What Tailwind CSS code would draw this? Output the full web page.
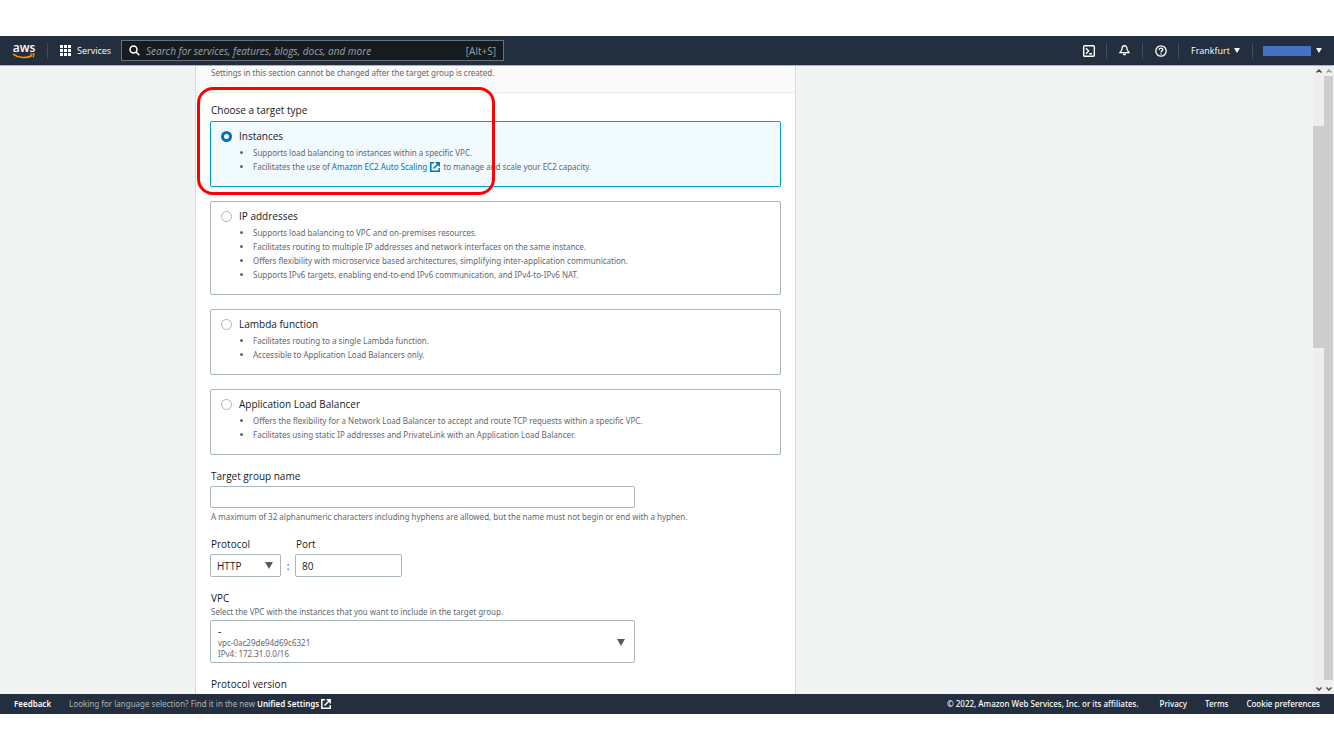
<!DOCTYPE html>
<html lang="en">
<head>
<meta charset="utf-8">
<meta name="viewport" content="width=device-width, initial-scale=1">
<title>Create target group</title>
<script src="https://cdn.jsdelivr.net/npm/@tailwindcss/browser@4"></script>
</head>
<body class="flex h-screen flex-col bg-white py-9 font-['Noto_Sans','Open_Sans',sans-serif] text-[8px] leading-[14px] text-[#5f6871]">
<header class="flex h-[30px] shrink-0 items-center border-b border-[#aab7b8] bg-[#232f3e] pr-3 pl-3 font-['Open_Sans','Noto_Sans',sans-serif] text-[9px] text-white">
  <a href="#" aria-label="AWS home" class="flex w-6 flex-col items-center">
    <span class="text-[12px] leading-[9px] font-semibold">aws</span>
    <svg class="mt-px h-[6px] w-[22px]" viewBox="0 0 22 6" fill="none" stroke="#ff9900"><path d="M0 1C6 5.500 14 5.500 19 2.500" stroke-width="1.500"/><path d="M17 1h4l-1 3.500" stroke-width="1.200"/></svg>
  </a>
  <span class="ml-[11px] h-4 w-px bg-[#414d5c]"></span>
  <button class="ml-3 flex items-center gap-[6px] font-medium">
    <svg class="size-[11px]" viewBox="0 0 11 11" fill="#fff"><path d="M0 0h3v3H0zM4 0h3v3H4zM8 0h3v3H8zM0 4h3v3H0zM4 4h3v3H4zM8 4h3v3H8zM0 8h3v3H0zM4 8h3v3H4zM8 8h3v3H8z"/></svg>
    <span class="w-8 whitespace-nowrap">Services</span>
  </button>
  <label class="ml-3 flex h-[21px] w-[383px] items-center border border-[#687078] bg-[#161b22] px-[7px]">
    <svg class="size-[11px] shrink-0" viewBox="0 0 11 11" fill="none" stroke="#fff" stroke-width="1.500"><circle cx="4.500" cy="4.500" r="3.500"/><path d="M7 7l3.300 3.300"/></svg>
    <input type="text" aria-label="Search" placeholder="Search for services, features, blogs, docs, and more" class="ml-[6px] min-w-0 flex-1 bg-transparent text-[10px] italic outline-none placeholder:text-[#95a5a6]">
    <span class="text-[10px] text-[#95a5a6]">[Alt+S]</span>
  </label>
  <nav class="ml-auto flex items-center">
    <button aria-label="CloudShell"><svg class="size-3" viewBox="0 0 12 12" fill="none" stroke="#fff" stroke-width="1.400"><rect x=".7" y=".7" width="10.600" height="10.600" rx="1"/><path d="M3 3.300L5.700 6 3 8.700M6.300 8.700H9"/></svg></button>
    <span class="ml-[11px] h-4 w-px bg-[#414d5c]"></span>
    <button aria-label="Notifications" class="ml-3"><svg class="size-[11px]" viewBox="0 0 12 12" fill="none" stroke="#fff" stroke-width="1.400" stroke-linejoin="round"><path d="M6 .8C4.200.8 3.400 2.200 3.400 3.800 3.400 5.600 2.500 6.400.8 8.400h10.400C9.500 6.400 8.600 5.600 8.600 3.800 8.600 2.200 7.800.8 6 .8z"/><path d="M4.600 9.200Q6 12.300 7.400 9.200"/></svg></button>
    <span class="ml-3 h-4 w-px bg-[#414d5c]"></span>
    <button aria-label="Help" class="ml-3"><svg class="size-3" viewBox="0 0 12 12" fill="none" stroke="#fff" stroke-width="1.300"><circle cx="6" cy="6" r="5.200"/><path d="M4.200 4.900C4.200 2.500 7.800 2.500 7.800 4.600 7.800 6 6 5.700 6 7.300M6 8.200v1.200"/></svg></button>
    <span class="ml-[11px] h-4 w-px bg-[#414d5c]"></span>
    <button class="ml-3 flex items-center gap-1 font-medium">Frankfurt <svg class="h-[5px] w-[6px]" viewBox="0 0 6 5" fill="#fff"><path d="M0 0h6L3 5z"/></svg></button>
    <span class="ml-3 h-4 w-px bg-[#414d5c]"></span>
    <button aria-label="Account" class="ml-[10px] flex items-center gap-[5px]"><span class="h-[10px] w-12 bg-[#4472c4]"></span><svg class="h-[5px] w-[6px]" viewBox="0 0 6 5" fill="#fff"><path d="M0 0h6L3 5z"/></svg></button>
  </nav>
</header>

<div class="flex min-h-0 flex-1 bg-[#f2f3f3]">
  <main class="min-w-0 flex-1 overflow-hidden pl-[195px]">
    <form class="relative w-[601px] border-x border-[#d5dbdb] bg-white pb-10">
      <p class="h-[27px] border-b border-[#eaeded] bg-[#fafafa] px-[15px]">Settings in this section cannot be changed after the target group is created.</p>
      <div class="px-[14px] pt-[10px]">
        <fieldset class="flex flex-col gap-[14px]">
          <legend class="mb-1 pl-px font-['Open_Sans'] text-[10px] text-[#16191f]">Choose a target type</legend>
          <div class="rounded-xs border border-[#00a1c9] bg-[#f1faff] px-[10px] pt-[7px] pb-3">
            <label class="flex items-center gap-[7px] font-['Open_Sans'] text-[10px] text-[#16191f]"><input type="radio" name="type" checked class="size-[11px] appearance-none rounded-full border border-[#aab7b8] bg-white checked:border-[3px] checked:border-[#0073bb]">Instances</label>
            <ul class="mt-[3px] list-disc pl-8">
              <li>Supports load balancing to instances within a specific VPC.</li>
              <li>Facilitates the use of <a href="#" class="text-[#0073bb]">Amazon EC2 Auto Scaling <svg class="mx-px inline size-[10px] align-[-2px]" viewBox="0 0 10 10" fill="none" stroke="currentColor" stroke-width="1.500"><path d="M4 .8H.8v8.400h8.400V6M5.500.8h3.700v3.700M9 1L3.500 6.500"/></svg></a> to manage and scale your EC2 capacity.</li>
            </ul>
          </div>
          <div class="rounded-xs border border-[#aab7b8] px-[10px] pt-[7px] pb-3">
            <label class="flex items-center gap-[7px] font-['Open_Sans'] text-[10px] text-[#16191f]"><input type="radio" name="type" class="size-[11px] appearance-none rounded-full border border-[#aab7b8] bg-white checked:border-[3px] checked:border-[#0073bb]">IP addresses</label>
            <ul class="mt-[3px] list-disc pl-8">
              <li>Supports load balancing to VPC and on-premises resources.</li>
              <li>Facilitates routing to multiple IP addresses and network interfaces on the same instance.</li>
              <li>Offers flexibility with microservice based architectures, simplifying inter-application communication.</li>
              <li>Supports IPv6 targets, enabling end-to-end IPv6 communication, and IPv4-to-IPv6 NAT.</li>
            </ul>
          </div>
          <div class="rounded-xs border border-[#aab7b8] px-[10px] pt-[7px] pb-3">
            <label class="flex items-center gap-[7px] font-['Open_Sans'] text-[10px] text-[#16191f]"><input type="radio" name="type" class="size-[11px] appearance-none rounded-full border border-[#aab7b8] bg-white checked:border-[3px] checked:border-[#0073bb]">Lambda function</label>
            <ul class="mt-[3px] list-disc pl-8">
              <li>Facilitates routing to a single Lambda function.</li>
              <li>Accessible to Application Load Balancers only.</li>
            </ul>
          </div>
          <div class="rounded-xs border border-[#aab7b8] px-[10px] pt-[7px] pb-3">
            <label class="flex items-center gap-[7px] font-['Open_Sans'] text-[10px] text-[#16191f]"><input type="radio" name="type" class="size-[11px] appearance-none rounded-full border border-[#aab7b8] bg-white checked:border-[3px] checked:border-[#0073bb]">Application Load Balancer</label>
            <ul class="mt-[3px] list-disc pl-8">
              <li>Offers the flexibility for a Network Load Balancer to accept and route TCP requests within a specific VPC.</li>
              <li>Facilitates using static IP addresses and PrivateLink with an Application Load Balancer.</li>
            </ul>
          </div>
        </fieldset>

        <div class="mt-[14px] flex flex-col">
          <label for="name" class="pl-px font-['Open_Sans'] text-[10px] text-[#16191f]">Target group name</label>
          <input id="name" type="text" class="mt-[3px] h-[22px] w-[425px] rounded-xs border border-[#aab7b8] px-[6px] text-[10px] text-[#16191f]">
          <p class="mt-[2px] pl-px">A maximum of 32 alphanumeric characters including hyphens are allowed, but the name must not begin or end with a hyphen.</p>
        </div>

        <div class="mt-[13px] flex items-end font-['Open_Sans'] text-[10px] text-[#16191f]">
          <div class="flex w-[71px] flex-col gap-[3px]">
            <label for="protocol" class="pl-px">Protocol</label>
            <div class="relative">
              <select id="protocol" class="h-[23px] w-full appearance-none rounded-xs border border-[#aab7b8] bg-white px-[6px]"><option>HTTP</option></select>
              <svg class="pointer-events-none absolute top-2 right-2 h-[7px] w-2" viewBox="0 0 8 7" fill="#545b64"><path d="M0 0h8L4 7z"/></svg>
            </div>
          </div>
          <span class="w-[14px] pb-1 text-center">:</span>
          <div class="flex w-[107px] flex-col gap-[3px]">
            <label for="port" class="pl-px">Port</label>
            <input id="port" type="text" value="80" class="h-[23px] rounded-xs border border-[#aab7b8] px-[6px]">
          </div>
        </div>

        <div class="mt-[15px]">
          <label for="vpc" class="block pl-px font-['Open_Sans'] text-[10px] leading-[13px] text-[#16191f]">VPC</label>
          <p class="pl-px leading-[13px]">Select the VPC with the instances that you want to include in the target group.</p>
          <button id="vpc" type="button" class="mt-[2px] flex h-[43px] w-[425px] items-center justify-between rounded-xs border border-[#aab7b8] pt-px pr-[9px] pl-[7px] text-left">
            <span class="flex flex-col leading-[11px]"><span class="text-[10px] text-[#16191f]">-</span><span>vpc-0ac29de94d69c6321</span><span>IPv4: 172.31.0.0/16</span></span>
            <svg class="h-[7px] w-2" viewBox="0 0 8 7" fill="#545b64"><path d="M0 0h8L4 7z"/></svg>
          </button>
        </div>
        <p class="mt-[14px] pl-px font-['Open_Sans'] text-[10px] text-[#16191f]">Protocol version</p>
      </div>
      <div class="pointer-events-none absolute top-[21px] left-[1px] h-[108px] w-[298px] rounded-[16px] border-[3px] border-[#ff0000]"></div>
    </form>
  </main>
  <div class="flex w-[11px] flex-col items-center bg-[#efefef]" aria-hidden="true">
    <svg class="mt-[3px] h-1 w-[6px]" viewBox="0 0 6 4" fill="none" stroke="#505050" stroke-width="1.500"><path d="M.5 3.500L3 1l2.500 2.500"/></svg>
    <span class="mt-[53px] h-[222px] w-full bg-[#cdcdcd]"></span>
    <svg class="mt-auto mb-[3px] h-1 w-[6px]" viewBox="0 0 6 4" fill="none" stroke="#505050" stroke-width="1.500"><path d="M.5.5L3 3 5.500.5"/></svg>
  </div>
  <div class="mr-px flex w-[9px] flex-col items-center bg-[#efefef]" aria-hidden="true">
    <svg class="mt-[3px] h-1 w-[6px]" viewBox="0 0 6 4" fill="none" stroke="#a3a3a3" stroke-width="1.500"><path d="M.5 3.500L3 1l2.500 2.500"/></svg>
    <span class="mt-[3px] w-full flex-1 bg-[#cdcdcd]"></span>
    <svg class="mt-[7px] mb-[3px] h-1 w-[6px]" viewBox="0 0 6 4" fill="none" stroke="#505050" stroke-width="1.500"><path d="M.5.5L3 3 5.500.5"/></svg>
  </div>
</div>

<footer class="flex h-5 shrink-0 items-center bg-[#232f3e] px-[14px] font-medium text-white">
  <button class="font-semibold">Feedback</button>
  <p class="ml-[18px] font-normal text-[#aab7b8]">Looking for language selection? Find it in the new <a href="#" class="font-semibold text-white">Unified Settings <svg class="inline size-[10px] align-[-2px]" viewBox="0 0 10 10" fill="none" stroke="currentColor" stroke-width="1.500"><path d="M4 .8H.8v8.400h8.400V6M5.500.8h3.700v3.700M9 1L3.500 6.500"/></svg></a></p>
  <p class="ml-auto">© 2022, Amazon Web Services, Inc. or its affiliates.</p>
  <a href="#" class="ml-[21px]">Privacy</a>
  <a href="#" class="ml-[18px]">Terms</a>
  <a href="#" class="ml-[18px]">Cookie preferences</a>
</footer>
</body>
</html>
